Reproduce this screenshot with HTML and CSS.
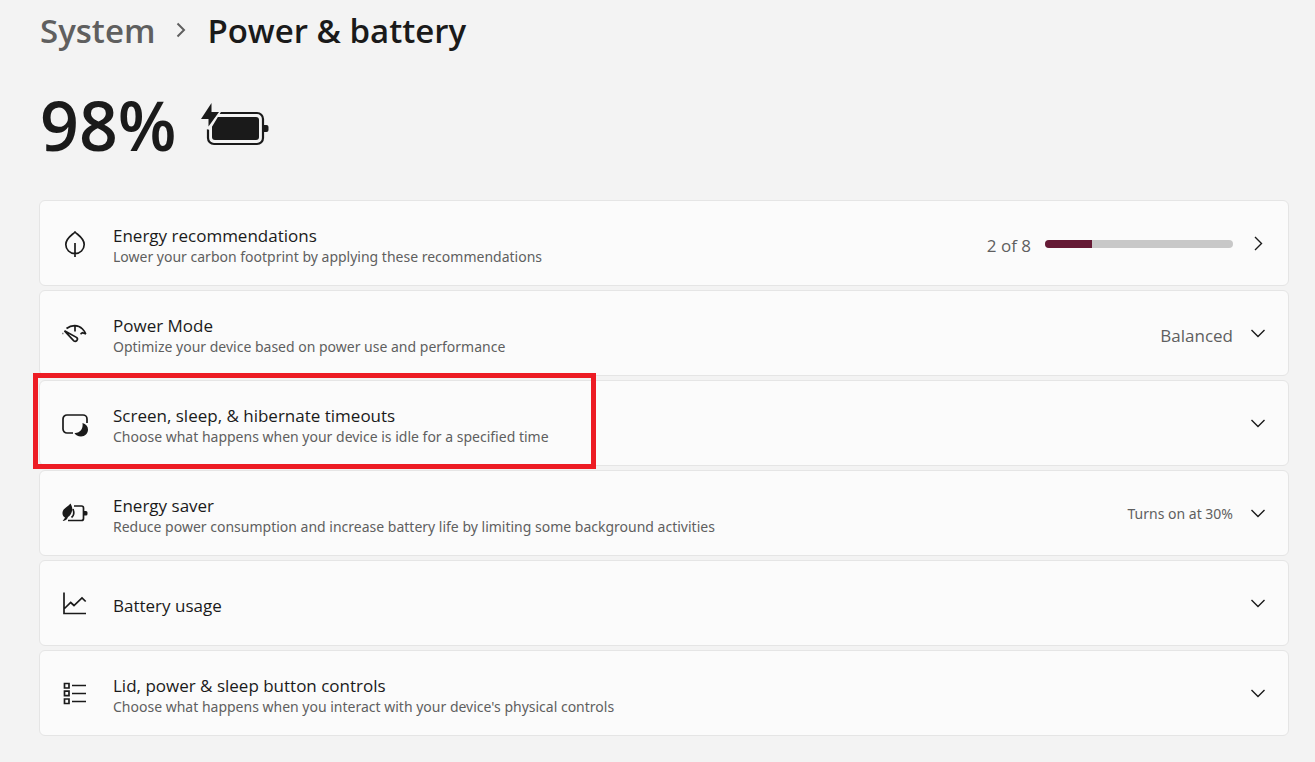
FILE: index.html
```html
<!DOCTYPE html>
<html lang="en">
<head>
<meta charset="utf-8">
<meta name="viewport" content="width=device-width, initial-scale=1">
<title>Power &amp; battery</title>
<link rel="stylesheet" href="styles.css">
</head>
<body>
<main class="page">
  <nav class="crumbs" aria-label="Breadcrumb">
    <a class="crumb-link" href="#">System</a>
    <svg class="crumb-sep" viewBox="0 0 10 16" aria-hidden="true"><path d="M1.500 1.500 8 8l-6.500 6.500"/></svg>
    <h1 class="crumb-current">Power &amp; battery</h1>
  </nav>

  <section class="charge">
    <span class="charge-value">98%</span>
    <svg class="charge-icon" viewBox="0 0 70 44" role="img" aria-label="Charging">
      <rect x="7" y="10" width="55" height="31" rx="6" fill="none" stroke="#1a1a1a" stroke-width="2.200"/>
      <rect x="11" y="14" width="47" height="23" rx="3" fill="#1a1a1a"/>
      <path d="M63 22h2.500a2 2 0 0 1 2 2v3a2 2 0 0 1-2 2H63z" fill="#1a1a1a"/>
      <path d="M0 8h20.500L9 27l-4-1H0z" fill="#f3f3f3"/>
      <path d="M10.500 0v9h7.500L7.500 23.500V16H0z" fill="#1a1a1a"/>
    </svg>
  </section>

  <section class="cards">
    <button class="card" type="button">
      <svg class="icon" viewBox="0 0 26 26" aria-hidden="true"><path d="M13 1C10.500 3.800 3.800 7 3.800 13.500a9.200 9.200 0 0 0 18.400 0C22.200 7 15.500 3.800 13 1zM13 12v14"/></svg>
      <span class="text"><span class="name">Energy recommendations</span><span class="hint">Lower your carbon footprint by applying these recommendations</span></span>
      <span class="state">2 of 8</span>
      <span class="track"><span class="fill" style="width:25%"></span></span>
      <svg class="chevron" viewBox="0 0 16 16" aria-hidden="true"><path d="M5 2l6.500 6.500L5 15"/></svg>
    </button>
    <button class="card" type="button">
      <svg class="icon" viewBox="0 0 26 26" aria-hidden="true"><path d="M4.500 7.500C9.500 3.800 16 3.600 20.500 8c1.500 1.500 2.500 3 3.300 5M13 5v5.500M24 13l-3.500-1.200-2 1.200M2.500 9.800l12.300 6.800a2.200 2.200 0 0 1-3 3.200z"/><path d="M.5 12.500h.8"/></svg>
      <span class="text"><span class="name">Power Mode</span><span class="hint">Optimize your device based on power use and performance</span></span>
      <span class="state">Balanced</span>
      <svg class="chevron" viewBox="0 0 16 16" aria-hidden="true"><path d="M1.500 5 8 11.500 14.500 5"/></svg>
    </button>
    <button class="card" type="button">
      <svg class="icon" viewBox="0 0 26 26" aria-hidden="true"><path d="M11 22H5a4 4 0 0 1-4-4V8a4 4 0 0 1 4-4h16a4 4 0 0 1 4 4v4"/><path class="solid" d="M20.500 12c3.500 1 5.500 3.500 5.500 6.500 0 4-3 7-7 7-3 0-5.500-1.200-6.500-3.500 5 .5 9-4 8-10z"/></svg>
      <span class="text"><span class="name">Screen, sleep, &amp; hibernate timeouts</span><span class="hint">Choose what happens when your device is idle for a specified time</span></span>
      <svg class="chevron" viewBox="0 0 16 16" aria-hidden="true"><path d="M1.500 5 8 11.500 14.500 5"/></svg>
      <span class="highlight"></span>
    </button>
    <button class="card" type="button">
      <svg class="icon" viewBox="0 0 26 26" aria-hidden="true"><path d="M12 5h7.500a2 2 0 0 1 2 2v10.500a2 2 0 0 1-2 2H6"/><path class="solid" d="M21.500 10H24a1.500 1.500 0 0 1 1.500 1.500v1.500a1.500 1.500 0 0 1-1.500 1.500h-2.500zM8.500 2.500C9.500 5 11 6.500 10 10c-.5 2.500-2 5-4 6-.8 2-2 3.700-5.200 4 0-1 1.400-1.500 2.200-3.500C.8 15 0 13 .7 10.500 1.700 7 5.500 6 8.500 2.500z"/><path d="M9.500 16.500c2-1.500 2.800-5 1.500-8.500"/></svg>
      <span class="text"><span class="name">Energy saver</span><span class="hint">Reduce power consumption and increase battery life by limiting some background activities</span></span>
      <span class="state state-small">Turns on at 30%</span>
      <svg class="chevron" viewBox="0 0 16 16" aria-hidden="true"><path d="M1.500 5 8 11.500 14.500 5"/></svg>
    </button>
    <button class="card" type="button">
      <svg class="icon" viewBox="0 0 26 26" aria-hidden="true"><path d="M2 1.500v21h22M2.500 17.500l6.200-6 3.300 3 8-7.500 3.700 3.500"/></svg>
      <span class="text"><span class="name">Battery usage</span></span>
      <svg class="chevron" viewBox="0 0 16 16" aria-hidden="true"><path d="M1.500 5 8 11.500 14.500 5"/></svg>
    </button>
    <button class="card" type="button">
      <svg class="icon" viewBox="0 0 26 26" aria-hidden="true"><path d="M2.500 2.500h4.500v4.500H2.500zM2.500 10.200h4.500v4.500H2.500zM2.500 18h4.500v4.500H2.500zM10 4.500h14M10 12.500h14M10 20.500h14"/></svg>
      <span class="text"><span class="name">Lid, power &amp; sleep button controls</span><span class="hint">Choose what happens when you interact with your device's physical controls</span></span>
      <svg class="chevron" viewBox="0 0 16 16" aria-hidden="true"><path d="M1.500 5 8 11.500 14.500 5"/></svg>
    </button>
  </section>
</main>
</body>
</html>
```
FILE: styles.css
```css
* { box-sizing: border-box; }
body {
  margin: 0;
  background: #f3f3f3;
  color: #1a1a1a;
  font-family: "Open Sans", "Noto Sans", sans-serif;
}
.page { padding: 5px 26px 24px 40px; }
.crumbs {
  display: flex;
  align-items: center;
  gap: 21px;
  height: 50px;
  font-size: 33px;
  font-weight: 600;
}
.crumb-link { color: #5f5f5f; text-decoration: none; }
.crumb-sep { width: 10px; height: 16px; fill: none; stroke: #5f5f5f; stroke-width: 2; }
.crumb-current { margin: 0; font-size: inherit; font-weight: inherit; }
.charge {
  display: flex;
  align-items: center;
  gap: 24px;
  height: 96px;
  margin: 22px 0 27px;
}
.charge-value { font-size: 68px; line-height: 96px; font-weight: 600; }
.charge-icon { width: 70px; height: 44px; }
.cards { display: flex; flex-direction: column; gap: 4px; margin-left: -1px; }
.card {
  position: relative;
  display: flex;
  align-items: center;
  width: 100%;
  min-height: 86px;
  padding: 0 22px;
  border: 1px solid #e5e5e5;
  border-radius: 6px;
  background: #fbfbfb;
  color: inherit;
  font-family: inherit;
  text-align: left;
}
.icon {
  flex: none;
  width: 26px;
  height: 28px;
  padding-top: 2px;
  margin-right: 25px;
  fill: none;
  stroke: #1a1a1a;
  stroke-width: 1.7;
}
.icon .solid { fill: #1a1a1a; stroke: none; }
.text { display: flex; flex: 1; flex-direction: column; padding-top: 5px; }
.name { font-size: 17px; line-height: 22px; }
.hint { font-family: "Noto Sans", sans-serif; font-size: 14px; line-height: 20px; color: #5f5f5f; }
.state { padding-top: 4px; font-size: 17px; color: #5f5f5f; }
.state-small { padding-top: 0; font-family: "Noto Sans", sans-serif; font-size: 14px; }
.track {
  width: 188px;
  height: 8px;
  margin: 2px 0 0 14px;
  border-radius: 4px;
  overflow: hidden;
  background: #c8c8c8;
}
.fill { display: block; height: 100%; background: #651a35; }
.chevron {
  flex: none;
  width: 16px;
  height: 16px;
  margin-left: 17px;
  fill: none;
  stroke: #1a1a1a;
  stroke-width: 1.4;
}
.highlight {
  position: absolute;
  top: -8px;
  left: -7px;
  width: 563px;
  height: 96px;
  border: 5px solid #ed1c24;
  pointer-events: none;
}
```
